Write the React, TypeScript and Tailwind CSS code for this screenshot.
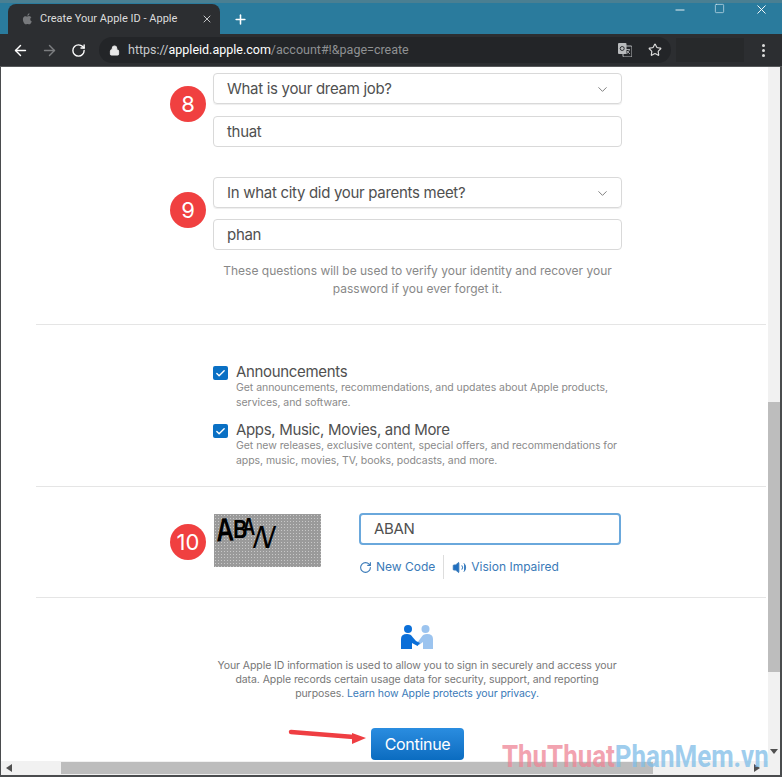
import type { ReactNode } from "react"
import { ChevronDown, Check, RotateCw, X, Plus, ArrowLeft, ArrowRight, Lock, Star, Minus, Square, Volume2 } from "lucide-react"

function Badge({ n, top }: { n: string; top: string }) {
  return (
    <div className={`absolute left-[169px] ${top} w-9 h-9 rounded-full bg-[#f04040] text-white flex items-center justify-center text-[22px] leading-none`}>
      {n}
    </div>
  )
}

function SelectBox({ label }: { label: string }) {
  return (
    <div className="h-[31px] pt-px rounded-[4px] border border-[#d9d9d9] flex items-center justify-between pl-[13px] pr-[11px] text-[15px] tracking-[-0.3px] text-[#505050] shadow-[0_1px_1px_#eeeeee]">
      <span>{label}</span>
      <ChevronDown size={15} strokeWidth={1.5} className="text-[#777777]" />
    </div>
  )
}

function TextBox({ value }: { value: string }) {
  return (
    <div className="h-[31px] pt-px rounded-[4px] border border-[#d9d9d9] flex items-center pl-[13px] text-[15px] tracking-[-0.3px] text-[#505050]">
      {value}
    </div>
  )
}

function CheckRow({ title, children }: { title: string; children: ReactNode }) {
  return (
    <div className="flex gap-[8px]">
      <div className="w-[15px] h-[14px] mt-[4px] rounded-[2px] bg-[#0a70c4] flex items-center justify-center shrink-0">
        <Check size={11} strokeWidth={3} className="text-white" />
      </div>
      <div>
        <div className="text-[15px] leading-[19px] tracking-[-0.33px] text-[#505050]">{title}</div>
        <div className="text-[10.5px] leading-[14.5px] tracking-[-0.05px] text-[#8a8a8a]">{children}</div>
      </div>
    </div>
  )
}

function Chrome() {
  return (
    <div className="h-[67px] shrink-0 flex flex-col font-['Roboto',sans-serif]">
      <div className="h-[34px] bg-[#2a7b9d] border-t-[3px] border-[#4a7f92] flex items-end pl-[8px] relative">
        <div className="w-[212px] h-[30px] bg-[#2c2e31] rounded-t-[8px] flex items-center pl-[13px] pr-[7px] text-[11px] text-[#dddddd]">
          <svg width="13" height="14" viewBox="0 0 24 24" className="text-[#77797c] mr-[6px]" fill="currentColor">
            <path d="M17.050 12.500c0-2.500 2-3.700 2.100-3.800-1.200-1.700-3-1.900-3.600-2-1.500-.2-3 .9-3.800.9s-2-.9-3.300-.9c-1.700 0-3.300 1-4.100 2.500-1.800 3-.5 7.600 1.200 10.100.9 1.200 1.900 2.600 3.200 2.500 1.300-.1 1.800-.8 3.300-.8s2 .8 3.300.8c1.400 0 2.300-1.200 3.100-2.500 1-1.400 1.400-2.800 1.400-2.900-.1 0-2.800-1-2.800-4.400ZM14.600 4.700c.7-.8 1.100-2 1-3.100-1 0-2.200.7-2.900 1.500-.6.7-1.200 1.900-1 3 1.100.1 2.200-.6 2.900-1.400Z" />
          </svg>
          <span className="flex-1">Create Your Apple ID - Apple</span>
          <X size={12} strokeWidth={2} className="text-[#c4c6c8]" />
        </div>
        <Plus size={15} strokeWidth={2.5} className="text-white ml-[13px] mb-[7px]" />
        <Minus size={14} strokeWidth={1.5} className="absolute left-[673px] top-[0px] text-white" />
        <Square size={11} strokeWidth={1.5} className="absolute left-[714px] top-[0px] text-[#cfe4ee]" />
        <X size={15} strokeWidth={1.5} className="absolute left-[754px] top-[-1px] text-white" />
      </div>
      <div className="flex-1 bg-[#2c2e31] border-b border-[#56585a] flex items-center pl-[12px] relative">
        <ArrowLeft size={17} strokeWidth={2} className="text-white" />
        <ArrowRight size={17} strokeWidth={2} className="text-[#7c7e80] ml-[12px]" />
        <RotateCw size={15} strokeWidth={2.2} className="text-white ml-[13px]" />
        <div className="ml-[13px] w-[572px] h-[26px] rounded-full bg-[#232528] flex items-center pl-[10px] pr-[9px] text-[12.5px]">
          <Lock size={11} fill="#e8e8e8" strokeWidth={2} className="text-[#e8e8e8] mr-[8px]" />
          <span className="text-[#c9cbcd]">https://</span>
          <span className="text-white">appleid.apple.com</span>
          <span className="text-[#8f9193]">/account#!&amp;page=create</span>
          <svg width="14" height="14" viewBox="0 0 14 14" className="ml-auto mr-[16px]">
            <rect x="5" y="3" width="9" height="11" rx="1" fill="none" stroke="#bbbdbf" strokeWidth="1" />
            <path d="M8 6.500h4M10 6v1M8.500 11l3-4M9 8l3 3" stroke="#bbbdbf" strokeWidth="0.8" fill="none" />
            <rect x="0" y="0" width="8.500" height="11" rx="1" fill="#b9bbbd" />
            <circle cx="4.200" cy="5.500" r="2" fill="none" stroke="#2c2e31" strokeWidth="1" />
          </svg>
          <Star size={14} strokeWidth={2} className="text-[#dddddd]" />
        </div>
        <div className="ml-[5px] w-[68px] h-[24px] bg-[#27292b]" />
        <div className="ml-[18px] flex flex-col gap-[2px]">
          <div className="w-[3px] h-[3px] rounded-full bg-[#dddddd]" />
          <div className="w-[3px] h-[3px] rounded-full bg-[#dddddd]" />
          <div className="w-[3px] h-[3px] rounded-full bg-[#dddddd]" />
        </div>
      </div>
    </div>
  )
}

function Captcha() {
  return (
    <div className="relative w-[107px] h-[53px] bg-[#9a9a9a] bg-[radial-gradient(#c8c8c8_1px,transparent_1px)] bg-size-[3px_3px] overflow-hidden text-black font-['Liberation_Sans',sans-serif]">
      <span className="absolute left-[-1px] top-[-2px] text-[33px] leading-[36px] font-bold scale-x-75 -rotate-3">A</span>
      <span className="absolute left-[17px] top-[0px] text-[26px] leading-[30px] font-bold scale-x-75">B</span>
      <span className="absolute left-[26px] top-[0px] text-[24px] leading-[26px] font-bold scale-x-75">A</span>
      <span className="absolute left-[39px] top-[5px] text-[32px] leading-[36px] font-normal skew-x-[-20deg] scale-x-90">N</span>
    </div>
  )
}

function HandshakeIcon() {
  return (
    <svg width="32" height="26" viewBox="0 0 32 26">
      <circle cx="7" cy="5" r="4" fill="#0b6fd8" />
      <circle cx="24.500" cy="5" r="4" fill="#9cc4ef" />
      <path d="M32 25 L32 15 Q32 10 26 10 Q22 10 20.500 13 L16 19 L18 21 L22 18 L22 25 Z" fill="#9cc4ef" />
      <path d="M0 25 L0 15 Q0 10 6 10 Q10 10 11.500 13 L15 17 L19 19 L16.500 22 L11 19 L11 25 Z" fill="#0b6fd8" />
    </svg>
  )
}

export default function App() {
  return (
    <div className="relative w-[782px] h-[777px] overflow-hidden flex flex-col bg-white font-['Inter','Liberation_Sans',sans-serif]">
      <Chrome />
      <div className="flex-1 min-h-0 flex border-l border-r-2 border-b-2 border-[#4a4c4e]">
        <div className="flex-1 min-w-0 flex flex-col">
          <div className="flex-1 min-h-0 relative overflow-hidden">
            <Badge n="8" top="top-[19px]" />
            <Badge n="9" top="top-[125px]" />
            <Badge n="10" top="top-[457px]" />

            <div className="w-[409px] ml-[212px] pt-[6px] flex flex-col">
              <SelectBox label="What is your dream job?" />
              <div className="mt-[12px]"><TextBox value="thuat" /></div>
              <div className="mt-[30px]"><SelectBox label="In what city did your parents meet?" /></div>
              <div className="mt-[11px]"><TextBox value="phan" /></div>
            </div>

            <p className="mt-[12px] ml-[212px] w-[409px] text-center text-[12px] leading-[18px] text-[#888888]">
              These questions will be used to verify your identity and recover your password if you ever forget it.
            </p>

            <div className="mt-[26px] ml-[35px] w-[730px] h-px bg-[#e5e5e5]" />

            <div className="ml-[212px] w-[415px] mt-[37px] flex flex-col gap-[10px]">
              <CheckRow title="Announcements">
                Get announcements, recommendations, and updates about Apple products, services, and software.
              </CheckRow>
              <CheckRow title="Apps, Music, Movies, and More">
                Get new releases, exclusive content, special offers, and recommendations for apps, music, movies, TV, books, podcasts, and more.
              </CheckRow>
            </div>

            <div className="mt-[18px] ml-[35px] w-[730px] h-px bg-[#e5e5e5]" />

            <div className="ml-[213px] mt-[27px] flex">
              <Captcha />
              <div className="ml-[38px] -mt-px w-[262px]">
                <div className="h-[32px] rounded-[4px] border-2 border-[#6aa8dc] flex items-center pl-[13px] text-[15px] tracking-[-0.3px] text-[#505050]">ABAN</div>
                <div className="mt-[10px] flex items-center text-[12px] text-[#3a7ab8] h-[24px]">
                  <RotateCw size={13} strokeWidth={2} className="mr-[4px]" />
                  <span>New Code</span>
                  <div className="w-px h-[24px] bg-[#dddddd] mx-[8px]" />
                  <Volume2 size={15} fill="#1f6fc0" strokeWidth={1.5} className="mr-[4px]" />
                  <span>Vision Impaired</span>
                </div>
              </div>
            </div>

            <div className="mt-[18px] ml-[35px] w-[730px] h-px bg-[#e5e5e5]" />

            <div className="ml-[209px] w-[414px] mt-[26px] flex flex-col items-center">
              <HandshakeIcon />
              <p className="mt-[9px] text-center text-[10.5px] leading-[14px] tracking-[-0.08px] text-[#777777]">
                Your Apple ID information is used to allow you to sign in securely and access your data. Apple records certain usage data for security, support, and reporting purposes. <span className="text-[#3a7ab8]">Learn how Apple protects your privacy.</span>
              </p>
              <div className="mt-[27px] ml-px w-[93px] h-[32px] rounded-[4px] bg-linear-to-b from-[#2a8de0] to-[#0a6cc0] text-white text-[16px] tracking-[-0.3px] flex items-center justify-center">Continue</div>
            </div>

            {/* red arrow on top of the page */}
            <svg width="80" height="20" viewBox="0 0 80 20" className="absolute left-[287px] top-[659px]">
              <path d="M3 6 L66 11" stroke="#ef3e42" strokeWidth="4.500" strokeLinecap="round" />
              <path d="M64 7 L78 12 L64 18 Z" fill="#ef3e42" />
            </svg>
          </div>

          <div className="h-[14px] shrink-0 bg-[#f1f1f1] flex items-center relative">
            <svg width="6" height="8" viewBox="0 0 6 8" className="absolute left-[5px] top-[3px]"><path d="M6 0 L0 4 L6 8 Z" fill="#505050" /></svg>
            <div className="ml-[60px] w-[592px] h-[12px] bg-[#bdbdbd]" />
            <svg width="6" height="8" viewBox="0 0 6 8" className="absolute right-[8px] top-[3px]"><path d="M0 0 L6 4 L0 8 Z" fill="#505050" /></svg>
          </div>
        </div>

        <div className="w-[12px] shrink-0 bg-[#f1f1f1] pt-[335px] relative">
          <div className="h-[270px] bg-[#bdbdbd]" />
          <svg width="8" height="5" viewBox="0 0 8 5" className="absolute left-[2px] bottom-[21px]"><path d="M0 0 L8 0 L4 5 Z" fill="#505050" /></svg>
        </div>
      </div>

      {/* watermark over the corner */}
      <div className="absolute left-[502px] top-[739px] w-[280px] whitespace-nowrap text-[32px] leading-[35px] font-bold font-['Roboto',sans-serif] origin-left scale-x-[0.81] opacity-75">
        <span className="text-[#ee8596]">ThuThuat</span><span className="text-[#7fbde8]">PhanMem.vn</span>
      </div>
    </div>
  )
}
